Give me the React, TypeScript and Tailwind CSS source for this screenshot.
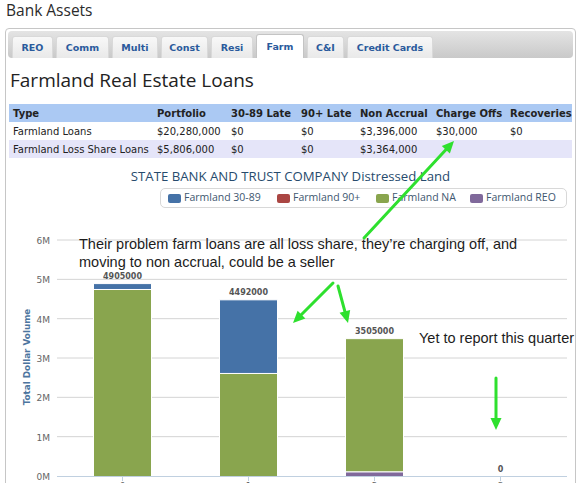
const tabs = [
  { label: "REO", w: "w-[41px]" },
  { label: "Comm", w: "w-[53px]" },
  { label: "Multi", w: "w-[46px]" },
  { label: "Const", w: "w-[47px]" },
  { label: "Resi", w: "w-[42px]" },
  { label: "Farm", w: "w-[48px]", active: true },
  { label: "C&I", w: "w-[37px]" },
  { label: "Credit Cards", w: "w-[86px]" },
];

const columns = [
  { title: "Type", w: "w-[144px]" },
  { title: "Portfolio", w: "w-[74px]" },
  { title: "30-89 Late", w: "w-[70px]" },
  { title: "90+ Late", w: "w-[59px]" },
  { title: "Non Accrual", w: "w-[76px]" },
  { title: "Charge Offs", w: "w-[74px]" },
  { title: "Recoveries", w: "w-[66px]" },
];

const rows = [
  {
    cells: ["Farmland Loans", "$20,280,000", "$0", "$0", "$3,396,000", "$30,000", "$0"],
    bg: "bg-white",
  },
  {
    cells: ["Farmland Loss Share Loans", "$5,806,000", "$0", "$0", "$3,364,000", "", ""],
    bg: "bg-[#e5e5f9]",
  },
];

const legend = [
  { label: "Farmland 30-89", color: "bg-[#4572a7]", w: "w-[109px]" },
  { label: "Farmland 90+", color: "bg-[#aa4643]", w: "w-[99px]" },
  { label: "Farmland NA", color: "bg-[#89a54e]", w: "w-[94px]" },
  { label: "Farmland REO", color: "bg-[#80699b]", w: "w-[90px]" },
];

const COLORS: Record<string, string> = {
  d3089: "#4572a7",
  d90: "#aa4643",
  na: "#89a54e",
  reo: "#80699b",
};

// stacked from the bottom up
const bars = [
  { x: 93, total: 4905000, parts: [["na", 4755000], ["d3089", 150000]] as [string, number][] },
  { x: 219, total: 4492000, parts: [["na", 2620000], ["d3089", 1872000]] as [string, number][] },
  { x: 345, total: 3505000, parts: [["reo", 120000], ["na", 3385000]] as [string, number][] },
  { x: 471, total: 0, parts: [] as [string, number][] },
];

const BASE = 475;
const PER_M = 39.33;
const toY = (v: number) => BASE - (v / 1000000) * PER_M;

function Plot() {
  return (
    <svg width={564} height={290} viewBox="8 207 564 290" className="block">
      {[1, 2, 3, 4, 5, 6].map((k) => (
        <line key={k} x1={57} x2={567} y1={toY(k * 1000000)} y2={toY(k * 1000000)} stroke="#d4d4d4" strokeWidth={1} />
      ))}
      {[0, 1, 2, 3, 4, 5, 6].map((k) => (
        <text
          key={k}
          x={50}
          y={toY(k * 1000000) + 4}
          textAnchor="end"
          fontFamily="DejaVu Sans, sans-serif"
          fontSize={9}
          fill="#666"
        >
          {k}M
        </text>
      ))}
      <text
        transform="translate(30,356) rotate(-90)"
        textAnchor="middle"
        fontFamily="DejaVu Sans, sans-serif"
        fontSize={8.8}
        fontWeight="bold"
        fill="#4d759e"
      >
        Total Dollar Volume
      </text>

      {bars.map((b, i) => {
        let acc = 0;
        return (
          <g key={i}>
            {b.parts.map(([key, v]) => {
              const y0 = toY(acc);
              acc += v;
              const y1 = toY(acc);
              return (
                <rect
                  key={key}
                  x={b.x + 0.5}
                  y={y1 + 0.5}
                  width={58}
                  height={y0 - y1}
                  fill={COLORS[key]}
                  stroke="#fff"
                  strokeWidth={1}
                />
              );
            })}
            <text
              x={b.x + 29.5}
              y={toY(b.total) - 4.5}
              textAnchor="middle"
              fontFamily="DejaVu Sans, sans-serif"
              fontSize={8}
              fontWeight="bold"
              fill="#555"
            >
              {b.total}
            </text>
            <line x1={b.x + 29.5} x2={b.x + 29.5} y1={BASE} y2={BASE + 5} stroke="#c0d0e0" />
            <text
              x={b.x + 29.5}
              y={BASE + 13}
              textAnchor="middle"
              fontFamily="DejaVu Sans, sans-serif"
              fontSize={9}
              fill="#666"
            >
              {i}
            </text>
          </g>
        );
      })}
      <line x1={57} x2={567} y1={BASE + 0.5} y2={BASE + 0.5} stroke="#c0d0e0" strokeWidth={1} />
    </svg>
  );
}

function Arrow({ x1, y1, x2, y2 }: { x1: number; y1: number; x2: number; y2: number }) {
  const len = Math.hypot(x2 - x1, y2 - y1);
  const ux = (x2 - x1) / len;
  const uy = (y2 - y1) / len;
  const hx = x2 - ux * 12;
  const hy = y2 - uy * 12;
  const px = -uy * 5.5;
  const py = ux * 5.5;
  return (
    <g>
      <line x1={x1} y1={y1} x2={hx} y2={hy} stroke="#2ee02e" strokeWidth={3} strokeLinecap="round" />
      <polygon points={`${x2},${y2} ${hx + px},${hy + py} ${hx - px},${hy - py}`} fill="#2ee02e" />
    </g>
  );
}

export default function App() {
  return (
    <div className="relative h-[483px] w-[580px] overflow-hidden bg-white font-['DejaVu_Sans',sans-serif]">
      <h1 className="pl-[6px] font-['Open_Sans',sans-serif] text-[15.5px] leading-[20px] text-[#2b2b2b]">Bank Assets</h1>

      <div className="ml-[5px] mt-2 w-[571px] rounded-[4px] border border-[#c6c6c6] p-[2px] pb-10">
        <div className="flex h-[27px] items-end gap-[3px] rounded-[4px] bg-linear-to-b from-[#e4e4e4] to-[#c9c9c9] pl-[4px]">
          {tabs.map((t) =>
            t.active ? (
              <div
                key={t.label}
                className={`${t.w} h-[24px] rounded-t-[3px] border border-b-0 border-[#c4c4c4] bg-white text-center text-[9.5px] font-bold leading-[24px] text-[#2a5a9c]`}
              >
                {t.label}
              </div>
            ) : (
              <div
                key={t.label}
                className={`${t.w} h-[22px] rounded-t-[3px] border border-b-0 border-[#d9d9d9] bg-linear-to-b from-[#f8f8f8] to-[#e9e9e9] text-center text-[9.5px] font-bold leading-[22px] text-[#2a5a9c]`}
              >
                {t.label}
              </div>
            )
          )}
        </div>

        <h2 className="mt-[8px] pl-[2px] font-['Open_Sans',sans-serif] text-[19px] leading-[28px] text-[#222]">
          Farmland Real Estate Loans
        </h2>

        <div className="ml-px mt-[10px] w-[563px] text-[10px] text-[#222]">
          <div className="flex h-[18px] items-center bg-[#abc9f3] font-bold">
            {columns.map((c) => (
              <div key={c.title} className={`${c.w} pl-[4px] whitespace-nowrap`}>
                {c.title}
              </div>
            ))}
          </div>
          {rows.map((r) => (
            <div key={r.cells[0]} className={`flex h-[18px] items-center ${r.bg}`}>
              {r.cells.map((cell, i) => (
                <div key={i} className={`${columns[i].w} pl-[4px] whitespace-nowrap`}>
                  {cell}
                </div>
              ))}
            </div>
          ))}
        </div>

        <div className="mt-[10px] text-center font-['Open_Sans',sans-serif] text-[13.2px] leading-[16px] text-[#274b6d]">
          STATE BANK AND TRUST COMPANY Distressed Land
        </div>

        <div className="ml-[152px] mt-[4px] flex h-[20px] w-[407px] items-center rounded-[5px] border border-[#d8d8d8] pl-[7px] font-['Open_Sans',sans-serif] text-[10.5px] text-[#3e576f]">
          {legend.map((l) => (
            <div key={l.label} className={`${l.w} flex items-center gap-[3px]`}>
              <span className={`h-[9px] w-[13px] rounded-[2px] ${l.color}`} />
              <span>{l.label}</span>
            </div>
          ))}
        </div>

        <Plot />
      </div>

      <div className="absolute left-[79px] top-[235px] whitespace-nowrap font-['Liberation_Sans',sans-serif] text-[14.5px] leading-[18px] text-[#1c1c1c]">
        Their problem farm loans are all loss share, they’re charging off, and
        <br />
        moving to non accrual, could be a seller
      </div>
      <div className="absolute left-[419px] top-[329px] whitespace-nowrap font-['Liberation_Sans',sans-serif] text-[14.5px] leading-[18px] text-[#1c1c1c]">
        Yet to report this quarter
      </div>

      <svg className="pointer-events-none absolute left-0 top-0" width={580} height={483}>
        <Arrow x1={364} y1={238} x2={454} y2={141} />
        <Arrow x1={333} y1={283} x2={293} y2={323} />
        <Arrow x1={338} y1={286} x2={348} y2={323} />
        <Arrow x1={496} y1={378} x2={496} y2={430} />
      </svg>
    </div>
  );
}
